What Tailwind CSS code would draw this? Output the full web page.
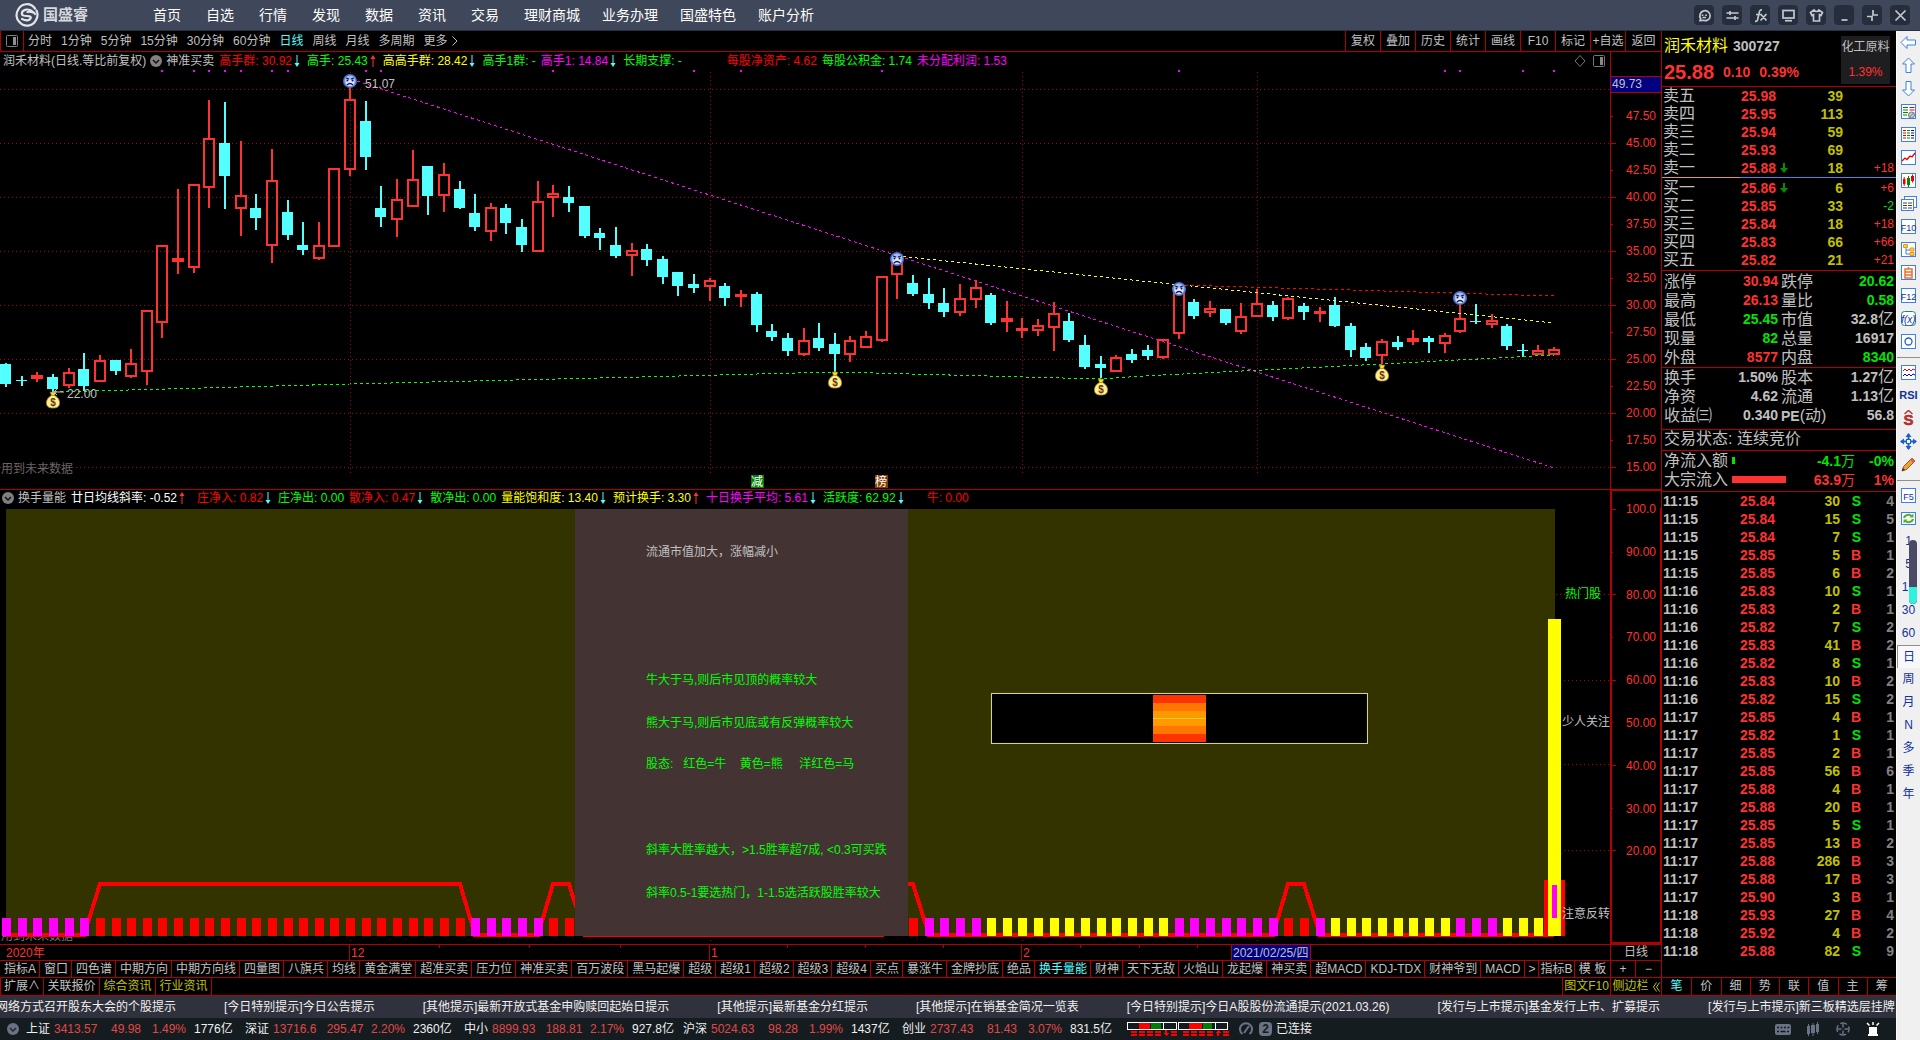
<!DOCTYPE html>
<html lang="zh-CN">
<head>
    <meta charset="UTF-8">
    <meta name="viewport" content="width=device-width, initial-scale=1.0">
    <title>国盛睿 - 润禾材料 300727</title>
    <script src="https://cdn.jsdelivr.net/npm/@tailwindcss/browser@4"></script>
</head>
<body class="flex h-screen flex-col overflow-hidden bg-black font-['Liberation_Sans','Noto_Sans_CJK_SC',sans-serif] text-xs text-[#c0c0c0]">

    <!-- title bar -->
    <header class="flex h-[31px] shrink-0 items-center border-b border-[#2a3040] bg-[#3f475a] pr-[10px] pl-[15px]">
        <svg class="h-6 w-6" viewBox="0 0 24 24" fill="none" stroke="#e4e6ea" stroke-width="2.2" stroke-linecap="round">
            <path d="M20 5.5A10 10.5 0 0 0 3 7c-2.500 4-1.500 9 1 11.500"/>
            <path d="M17.500 8.500C14 5.500 8 6 7 9.500c-.8 3 2 3.500 5 3.500 2.500 0 4.500.5 3.500 2.500-1 2.200-4.500 2.500-8.500.5"/>
            <path d="M4.500 19A10 10.500 0 0 0 21 17c2.300-4 1.800-7 .5-9.500"/>
            <path d="M20 11c-.5-1.500-4-2.800-7.500-2"/>
        </svg>
        <span class="ml-1 w-[110px] text-[15px] leading-5 font-bold text-[#d6d9df]">国盛睿</span>
        <nav class="flex gap-[22px] text-sm leading-5 whitespace-nowrap text-white">
            <div class="flex gap-[25px]">
                <a href="#">首页</a><a href="#">自选</a><a href="#">行情</a><a href="#">发现</a><a href="#">数据</a><a href="#">资讯</a><a href="#">交易</a><a href="#">理财商城</a>
            </div>
            <a href="#">业务办理</a><a href="#">国盛特色</a><a href="#">账户分析</a>
        </nav>
        <div id="window-buttons" class="ml-auto flex gap-2"></div>
    </header>

    <div class="flex min-h-0 flex-1">
        <div class="flex min-w-0 flex-1 flex-col">
            <div class="flex min-h-0 flex-1">

                <!-- charts -->
                <main class="flex min-w-0 flex-1 flex-col border-r border-[#b00000]">
                    <div class="flex h-[21px] shrink-0 items-center border-b border-[#b00000] leading-5 whitespace-nowrap">
                        <button class="flex h-5 w-6 items-center justify-center border-x border-[#b00000]" aria-label="侧栏">
                            <svg class="h-3 w-3" viewBox="0 0 12 12"><rect x=".5" y=".5" width="11" height="11" rx="1" fill="none" stroke="#808080"/><rect x="7" y="2" width="3" height="8" fill="#909090"/></svg>
                        </button>
                        <div class="flex gap-[9px] pl-1">
                            <button>分时</button><button>1分钟</button><button>5分钟</button><button>15分钟</button><button>30分钟</button><button>60分钟</button><button class="text-[#54ffff]">日线</button><button>周线</button><button>月线</button><button>多周期</button>
                            <button class="flex items-center">更多<svg class="ml-1 h-3 w-[6px]" viewBox="0 0 6 12" fill="none" stroke="#c0c0c0"><path d="M.5 1.500L5 6 .5 10.500"/></svg></button>
                        </div>
                        <div class="ml-auto flex">
                            <button class="w-[35px] border-l border-[#b00000]">复权</button><button class="w-[35px] border-l border-[#b00000]">叠加</button><button class="w-[35px] border-l border-[#b00000]">历史</button><button class="w-[35px] border-l border-[#b00000]">统计</button><button class="w-[35px] border-l border-[#b00000]">画线</button><button class="w-[35px] border-l border-[#b00000]">F10</button><button class="w-[35px] border-l border-[#b00000]">标记</button><button class="w-[35px] border-l border-[#b00000]">+自选</button><button class="w-[36px] border-l border-[#b00000]">返回</button>
                        </div>
                    </div>

                    <section class="flex min-h-0 flex-[437] flex-col border-b border-[#b00000]">
                        <div class="flex h-[18px] shrink-0 leading-[18px] whitespace-nowrap">
                            <div class="flex min-w-0 flex-1 items-center overflow-hidden pl-[3px]">
                                <span>润禾材料(日线.等比前复权)</span>
                                <svg class="mx-1 h-3 w-3 shrink-0" viewBox="0 0 12 12"><circle cx="6" cy="6" r="6" fill="#808080"/><path d="M3 5l3 3 3-3" fill="none" stroke="#111" stroke-width="1.500"/></svg>
                                <span class="mr-[5px]">神准买卖</span>
                                <div id="readout-price" class="flex gap-[5px]"></div>
                                <svg class="mr-[3px] ml-auto h-4 w-[34px] shrink-0" viewBox="0 0 34 16" fill="none" stroke="#777"><path d="M7 2.500L12 8 7 13.500 2 8z"/><rect x="20.500" y="2.500" width="11" height="11" rx="1"/><rect x="27" y="4" width="3" height="8" fill="#888" stroke="none"/></svg>
                            </div>
                            <div class="w-[51px] border-l border-[#b00000]"></div>
                        </div>
                        <div class="min-h-0 flex-1"><svg id="chart-price" class="block h-full w-full overflow-visible"></svg></div>
                    </section>

                    <section class="flex min-h-0 flex-[455] flex-col">
                        <div class="flex h-[18px] shrink-0 leading-4 whitespace-nowrap">
                            <div class="flex min-w-0 flex-1 items-center overflow-hidden pb-[2px] pl-[2px]">
                                <svg class="mr-1 h-3 w-3 shrink-0" viewBox="0 0 12 12"><circle cx="6" cy="6" r="6" fill="#808080"/><path d="M3 5l3 3 3-3" fill="none" stroke="#111" stroke-width="1.500"/></svg>
                                <span class="mr-[5px]">换手量能</span>
                                <div id="readout-volume" class="flex gap-[5px]"></div>
                            </div>
                            <div class="w-[51px] border-t border-l-2 border-[#b00000]"></div>
                        </div>
                        <div class="min-h-0 flex-1"><svg id="chart-volume" class="block h-full w-full overflow-visible"></svg></div>
                    </section>

                    <div class="flex h-4 shrink-0 border-t border-[#b00000] leading-[15px]">
                        <div class="min-w-0 flex-1"><svg id="date-axis" class="block h-full w-full"></svg></div>
                        <button class="w-[51px] border-l border-[#b00000]">日线</button>
                    </div>

                    <div class="flex h-[17px] shrink-0 border-t border-[#b00000] leading-4 whitespace-nowrap">
                        <div id="indicator-tabs" class="flex min-w-0 flex-1 overflow-hidden"></div>
                        <button class="w-[37px] border-x border-[#b00000]">指标B</button>
                        <button class="w-[35px]">模 板</button>
                        <button class="w-[25px] border-l border-[#b00000]">+</button>
                        <button class="w-[26px] border-l border-[#b00000]">−</button>
                    </div>

                    <div class="flex h-[19px] shrink-0 border-y border-[#b00000] leading-[17px] whitespace-nowrap">
                        <button class="w-11 border-x border-[#b00000]">扩展∧</button>
                        <button class="w-14 border-r border-[#b00000]">关联报价</button>
                        <button class="w-14 border-r border-[#b00000] text-[#c0c000]">综合资讯</button>
                        <button class="w-14 border-r border-[#b00000] text-[#c0c000]">行业资讯</button>
                        <button class="ml-auto w-12 border-l border-[#b00000] text-[#c0c000]">图文F10</button>
                        <button class="flex w-[51px] items-center justify-center gap-1 border-l border-[#b00000] text-[#c0c000]">侧边栏<svg class="h-[10px] w-[7px]" viewBox="0 0 7 10" fill="none" stroke="#c0c000"><path d="M3.500.5L.5 5l3 4.500M6.500.5l-3 4.500 3 4.500"/></svg></button>
                    </div>
                </main>

                <!-- quote panel -->
                <aside class="flex w-[234px] shrink-0 flex-col">
                    <div class="flex h-14 shrink-0 justify-between border-b border-[#b00000] pt-[5px] pr-[6px] pl-[2px]">
                        <div>
                            <div class="flex items-center gap-[5px] leading-5">
                                <span class="text-base leading-5 text-[#ffff00]">润禾材料</span>
                                <span class="text-sm leading-5 font-bold">300727</span>
                            </div>
                            <div class="mt-1 flex items-center gap-[9px] text-sm leading-6 font-bold text-[#ff3232]">
                                <span class="text-xl leading-6">25.88</span><span>0.10</span><span>0.39%</span>
                            </div>
                        </div>
                        <a href="#" class="flex h-12 w-[49px] flex-col items-center justify-between bg-[#1e1e20] pt-[2px] pb-[3px] leading-[18px] whitespace-nowrap">
                            <span>化工原料</span><span class="text-[#ff3232]">1.39%</span>
                        </a>
                    </div>

                    <table class="w-full table-fixed text-right text-sm leading-[18px]">
                        <tbody id="asks"></tbody>
                    </table>
                    <div class="flex h-px shrink-0 bg-[#3c8ce0]"><div class="w-1/3 bg-[#e0a020]"></div></div>
                    <table class="my-[1px] w-full table-fixed text-right text-sm leading-[18px]">
                        <tbody id="bids"></tbody>
                    </table>

                    <dl id="stats-day" class="grid h-[98px] shrink-0 auto-rows-[19px] grid-cols-[48px_66px_54px_62px] content-start border-y border-[#b00000] pt-[1px] pl-[2px] leading-[19px] whitespace-nowrap"></dl>
                    <dl id="stats-base" class="grid h-[62px] shrink-0 auto-rows-[19px] grid-cols-[48px_66px_54px_62px] content-start border-b border-[#b00000] pl-[2px] leading-[19px] whitespace-nowrap"></dl>
                    <p class="h-[21px] shrink-0 border-b border-[#b00000] pl-[2px] text-base leading-[18px]">交易状态: 连续竞价</p>

                    <div class="h-[41px] shrink-0 border-b border-[#b00000] pl-[2px] text-base leading-5">
                        <div class="flex h-[19px] items-center">
                            <span class="w-[68px]">净流入额</span>
                            <div class="w-14"><div class="h-[7px] bg-[#00e600]" style="width:3px"></div></div>
                            <b class="w-[67px] text-right text-sm leading-5 text-[#00e600]">-4.1<span class="font-normal">万</span></b>
                            <b class="w-[39px] text-right text-sm leading-5 text-[#00e600]">-0%</b>
                        </div>
                        <div class="flex h-[19px] items-center">
                            <span class="w-[68px]">大宗流入</span>
                            <div class="w-14"><div class="h-[7px] bg-[#ff3232]" style="width:54px"></div></div>
                            <b class="w-[67px] text-right text-sm leading-5 text-[#ff3232]">63.9<span class="font-normal">万</span></b>
                            <b class="w-[39px] text-right text-sm leading-5 text-[#ff3232]">1%</b>
                        </div>
                    </div>

                    <div class="min-h-0 flex-1 overflow-hidden">
                        <table class="w-full table-fixed text-right text-sm leading-[18px]">
                            <tbody id="ticks"></tbody>
                        </table>
                    </div>
                    <div class="grid h-[19px] shrink-0 grid-cols-8 border-y border-[#b00000] leading-[17px]">
                        <button class="text-[#54ffff]">笔</button><button class="border-l border-[#b00000]">价</button><button class="border-l border-[#b00000]">细</button><button class="border-l border-[#b00000]">势</button><button class="border-l border-[#b00000]">联</button><button class="border-l border-[#b00000]">值</button><button class="border-l border-[#b00000]">主</button><button class="border-l border-[#b00000]">筹</button>
                    </div>
                </aside>
            </div>

            <!-- news ticker -->
            <div class="flex h-[22px] shrink-0 items-center overflow-hidden bg-[#2f323c] leading-[22px] text-[#f0f0f0]">
                <div class="-ml-1 flex shrink-0 gap-12 whitespace-nowrap">
                    <a href="#">网络方式召开股东大会的个股提示</a>
                    <a href="#">[今日特别提示]今日公告提示</a>
                    <a href="#">[其他提示]最新开放式基金申购赎回起始日提示</a>
                    <a href="#">[其他提示]最新基金分红提示</a>
                    <a href="#">[其他提示]在销基金简况一览表</a>
                    <a href="#">[今日特别提示]今日A股股份流通提示(2021.03.26)</a>
                    <a href="#">[发行与上市提示]基金发行上市、扩募提示</a>
                    <a href="#">[发行与上市提示]新三板精选层挂牌</a>
                </div>
            </div>

            <!-- status bar -->
            <footer class="flex h-[22px] shrink-0 items-center overflow-hidden bg-[#151c20] pl-[7px] leading-[22px] whitespace-nowrap text-[#f0f0f0]">
                <svg class="mr-[7px] h-3 w-3 shrink-0" viewBox="0 0 12 12"><circle cx="6" cy="6" r="6" fill="#6a7285"/><path d="M3 5l3 3 3-3" fill="none" stroke="#20262c" stroke-width="1.500"/></svg>
                <div id="indices" class="flex"></div>
                <svg class="ml-[6px] h-[14px] w-[102px] shrink-0" viewBox="0 0 102 14" shape-rendering="crispEdges">
                    <g fill="none" stroke="#fff"><rect x=".5" y=".5" width="49" height="7"/><rect x="51.500" y=".5" width="49" height="7"/></g>
                    <path fill="#f00" d="M12 1h11v6H12zM62 1h13v6H62z"/><path fill="#008000" d="M24 1h10v6H24zM76 1h9v6h-9z"/><path fill="#fff" d="M36 1h1v6h-1zM88 1h1v6h-1z"/>
                    <path stroke="#f00" stroke-width="2" stroke-dasharray="6 2" d="M4 10h30M44 10h6M4 13h30M44 13h6M56 10h30M96 10h6M56 13h30M96 13h6"/>
                    <path fill="#f00" d="M38 8h2v3h2l-3 3-3-3h2zM90 14h2v-3h2l-3-3-3 3h2z"/>
                </svg>
                <svg class="ml-[10px] h-[14px] w-[14px] shrink-0" viewBox="0 0 14 14" fill="none" stroke="#6a7285" stroke-width="2"><path d="M3.500 12A6 6 0 1 1 10.500 12"/><path d="M5 11l5-7"/></svg>
                <span class="ml-[6px] h-[14px] w-[13px] shrink-0 rounded-sm bg-[#6a7285] text-center leading-[14px] font-bold text-[#151c20]">2</span>
                <span class="ml-1">已连接</span>
                <div class="mr-[15px] ml-auto flex shrink-0 items-center gap-[14px]">
                    <svg class="h-4 w-4" viewBox="0 0 16 16"><rect y="3" width="16" height="11" rx="2" fill="#6a7285"/><path d="M2 6.500h2m1.500 0h2m1.500 0h2m1.500 0h2M2 10.500h2m1.500 0h5m1.500 0h2" stroke="#151c20" stroke-width="1.500"/></svg>
                    <svg class="h-4 w-4" viewBox="0 0 16 16" fill="#6a7285"><path d="M2 5h3v8H2zM3 3h1v12H3zM6 4h4v8H6zM7.500 2h1v13h-1zM11 3h3v8h-3zM12 1h1v12h-1z"/></svg>
                    <svg class="h-4 w-4" viewBox="0 0 16 16" fill="none" stroke="#6a7285" stroke-width="1.500"><circle cx="8" cy="8" r="6" stroke-dasharray="7 2.420" stroke-dashoffset="3.500"/><path d="M8 3v3.500M8 9.500V13M3 8h3.500M9.500 8H13"/></svg>
                    <svg class="h-4 w-4" viewBox="0 0 16 16" fill="#fff"><path d="M4 6h8v7H4zM3 13h10v2H3z"/><path d="M8 1v3M2 2l2.500 2.500M14 2l-2.500 2.500" stroke="#fff" stroke-width="1.500"/></svg>
                </div>
            </footer>
        </div>

        <!-- side toolbar -->
        <nav class="relative flex w-6 shrink-0 flex-col items-center border-l border-white bg-[#f0f0f0] text-[#10309c]">
            <div id="side-tools" class="flex w-full flex-col"></div>
            <div class="absolute top-[509px] right-[3px] flex h-16 w-2 flex-col justify-end overflow-hidden rounded-full bg-[#4a4a66]">
                <div class="h-[17px] rounded-b-full bg-[#30f0e0]"></div>
            </div>
        </nav>
    </div>

    <script>
        const RED = '#ff3232', CYAN = '#54ffff', LINE = '#b00000', MAG = '#ff00ff';

        // ---------- title bar buttons ----------
        const windowIcons = [
            ['消息', '<path d="M3 12.500l.7-2A5.200 5 0 1 1 6 12.300z"/><path d="M5.500 6.500v1.500M9 6.500v1.500M5.500 9.500h3.500"/>'],
            ['设置', '<path d="M1.500 5h12M1.500 10h12M5 3v4M10 8v4"/>'],
            ['公式', '<path d="M9 2C7 1.500 6.500 3 6 5.500L4.500 12c-.5 1.500-1 1.500-2.500 1.200M3 6.500h6M8 6.500l5.500 6M13.500 6L7.500 12.500"/>'],
            ['屏幕', '<rect x="2" y="2.500" width="11" height="7.500"/><path d="M4 12.700h7"/>'],
            ['皮肤', '<path d="M5 2L1.500 4.500 3 7.500l1.500-.8V13h6V6.700l1.500.8 1.500-3L10 2c-1 2-4 2-5 0z"/>'],
            ['最小化', '<path d="M4.500 12h6"/>'],
            ['还原', '<path d="M2 8.500h5V13M8 2v5h5"/>'],
            ['关闭', '<path d="M2.500 2.500l10 10M12.500 2.500l-10 10"/>']
        ];
        document.getElementById('window-buttons').innerHTML = windowIcons.map(([name, path]) =>
            `<button aria-label="${name}" class="flex h-5 w-5 items-center justify-center rounded bg-[#262e3e]"><svg class="h-[15px] w-[15px]" viewBox="0 0 15 15" fill="none" stroke="#c4c8d0" stroke-width="1.700">${path}</svg></button>`).join('');

        // ---------- indicator readouts ----------
        function readout(items) {
            return items.map(([text, color, dir, pad]) => {
                let arrow = '';
                if (dir === 'd') arrow = '<svg class="h-[14px] w-[10px]" viewBox="0 0 10 14"><path d="M4.500 1h1v8h2L5 13 2.500 9h2z" fill="#54ffff"/></svg>';
                if (dir === 'u') arrow = '<svg class="h-[14px] w-[10px]" viewBox="0 0 10 14"><path d="M4.500 13h1V5h2L5 1 2.500 5h2z" fill="#ff3232"/></svg>';
                return `<span class="flex items-center ${pad || ''}" style="color:${color}">${text}${arrow}</span>`;
            }).join('');
        }
        document.getElementById('readout-price').innerHTML = readout([
            ['高手群: 30.92', '#f00', 'd'], ['高手: 25.43', '#0f0', 'u'], ['高高手群: 28.42', '#ff0', 'd'],
            ['高手1群: -', '#0f0'], ['高手1: 14.84', '#f0f', 'd'], ['长期支撑: -', '#0f0'],
            ['每股净资产: 4.62', '#f00', '', 'pl-10'], ['每股公积金: 1.74', '#0f0'], ['未分配利润: 1.53', '#f0f']
        ]);
        document.getElementById('readout-volume').innerHTML = readout([
            ['廿日均线斜率: -0.52', '#fff', 'u', 'pr-[5px]'], ['庄净入: 0.82', '#f00', 'd'], ['庄净出: 0.00', '#0f0'],
            ['散净入: 0.47', '#f00', 'd'], ['散净出: 0.00', '#0f0'], ['量能饱和度: 13.40', '#ff0', 'd'],
            ['预计换手: 3.30', '#ff0', 'u'], ['十日换手平均: 5.61', '#f0f', 'd'], ['活跃度: 62.92', '#0f0', 'd'],
            ['牛: 0.00', '#f00', '', 'pl-4']
        ]);

        // ---------- indicator tabs ----------
        const tabs = ['指标A', '窗口', '四色谱', '中期方向', '中期方向线', '四量图', '八旗兵', '均线', '黄金满堂', '超准买卖', '压力位', '神准买卖', '百万波段', '黑马起爆', '超级', '超级1', '超级2', '超级3', '超级4', '买点', '暴涨牛', '金牌抄底', '绝品', '换手量能', '财神', '天下无敌', '火焰山', '龙起爆', '神买卖', '超MACD', 'KDJ-TDX', '财神爷到', 'MACD', '>'];
        document.getElementById('indicator-tabs').innerHTML = tabs.map(t =>
            `<button class="shrink-0 border-r border-[#b00000] pr-[3px] pl-1 ${t === '换手量能' ? 'text-[#54ffff]' : ''}">${t}</button>`).join('');

        // ---------- order book ----------
        function bookRow([name, price, vol, diff, arrow]) {
            return `<tr><th class="w-12 pl-[1px] text-left text-base leading-[18px] font-normal">${name}</th>
                <td class="w-[66px] font-bold text-[#ff3232]">${price}</td>
                <td class="w-4">${arrow ? '<svg class="mx-auto h-[10px] w-2" viewBox="0 0 8 10"><path d="M3 0h2v5h3L4 10 0 5h3z" fill="#009000"/></svg>' : ''}</td>
                <td class="w-[51px] font-bold text-[#c0c000]">${vol}</td>
                <td class="pr-[2px] text-xs leading-[18px]" style="color:${diff[0] === '-' ? '#00e600' : RED}">${diff}</td></tr>`;
        }
        document.getElementById('asks').innerHTML = [['卖五', '25.98', 39, ''], ['卖四', '25.95', 113, ''], ['卖三', '25.94', 59, ''], ['卖二', '25.93', 69, ''], ['卖一', '25.88', 18, '+18', 1]].map(bookRow).join('');
        document.getElementById('bids').innerHTML = [['买一', '25.86', 6, '+6', 1], ['买二', '25.85', 33, '-2'], ['买三', '25.84', 18, '+18'], ['买四', '25.83', 66, '+66'], ['买五', '25.82', 21, '+21']].map(bookRow).join('');

        function stats(items) {
            return items.map(([name, value, color], i) =>
                `<dt class="text-base leading-[19px] ${i % 2 ? 'pl-[3px]' : ''}">${name}</dt><dd class="text-right text-sm leading-[19px] font-bold" style="color:${color || '#c0c0c0'}">${value}</dd>`).join('');
        }
        const yi = '<span class="text-base leading-4 font-normal">亿</span>';
        document.getElementById('stats-day').innerHTML = stats([
            ['涨停', '30.94', RED], ['跌停', '20.62', '#00e600'], ['最高', '26.13', RED], ['量比', '0.58', '#00e600'],
            ['最低', '25.45', '#00e600'], ['市值', '32.8' + yi], ['现量', '82', '#00e600'], ['总量', '16917'],
            ['外盘', '8577', RED], ['内盘', '8340', '#00e600']
        ]);
        document.getElementById('stats-base').innerHTML = stats([
            ['换手', '1.50%'], ['股本', '1.27' + yi], ['净资', '4.62'], ['流通', '1.13' + yi],
            ['收益㈢', '0.340'], ['<b class="text-sm leading-4">PE</b>(动)', '56.8']
        ]);

        // ---------- trades ----------
        const trades = `15 84 30 S 4|15 84 15 S 5|15 84 7 S 1|15 85 5 B 1|15 85 6 B 2|16 83 10 S 1|16 83 2 B 1|16 82 7 S 2|16 83 41 B 2|16 82 8 S 1|16 83 10 B 2|16 82 15 S 2|17 85 4 B 1|17 82 1 S 1|17 85 2 B 1|17 85 56 B 6|17 88 4 B 1|17 88 20 B 1|17 85 5 S 1|17 85 13 B 2|17 88 286 B 3|17 88 17 B 3|17 90 3 B 1|18 93 27 B 4|18 92 4 B 2|18 88 82 S 9`;
        document.getElementById('ticks').innerHTML = trades.split('|').map(row => {
            const [m, p, v, side, n] = row.split(' ');
            return `<tr class="font-bold"><td class="w-[50px] pl-[1px] text-left">11:${m}</td><td class="w-[63px] text-[#ff3232]">25.${p}</td><td class="w-[65px] text-[#c0c000]">${v}</td><td class="w-[21px]" style="color:${side === 'S' ? '#00e600' : RED}">${side}</td><td class="pr-[2px] text-[#808080]">${n}</td></tr>`;
        }).join('');

        // ---------- index quotes ----------
        const indices = [['上证', '3413.57', '49.98', '1.49%', '1776亿'], ['深证', '13716.6', '295.47', '2.20%', '2360亿'], ['中小', '8899.93', '188.81', '2.17%', '927.8亿'], ['沪深', '5024.63', '98.28', '1.99%', '1437亿'], ['创业', '2737.43', '81.43', '3.07%', '831.5亿']];
        document.getElementById('indices').innerHTML = indices.map(([name, p, c, pc, v]) =>
            `<div class="flex w-[219px] shrink-0"><span class="w-7">${name}</span><span class="w-[46px] text-[#e04848]">${p}</span><span class="w-[52px] text-center text-[#e04848]">${c}</span><span class="w-[42px] text-[#e04848]">${pc}</span><span>${v}</span></div>`).join('');

        // ---------- side toolbar ----------
        const box = '<rect x="1.500" y="1.500" width="14" height="14" fill="#fff" stroke="#3c80f0"/>';
        const label = (t) => box + `<text x="8.500" y="12.500" text-anchor="middle" font-size="9" fill="#1030b0">${t}</text>`;
        const side = [
            ['后退', '<path d="M1 8.500l6-6v3.500h8.500v5H7v3.500z" fill="#fff" stroke="#3c80f0"/>'],
            ['上翻', '<path d="M8.500 1l6 6h-3.500v8.500H6V7H2.500z" fill="#fff" stroke="#3c80f0"/>'],
            ['下翻', '<path d="M8.500 16l6-6h-3.500V1.500H6V10H2.500z" fill="#fff" stroke="#3c80f0"/>'],
            ['报价', box + '<path d="M3 4.500h5M3 7h5M3 9.500h5M3 12h4" stroke="#080"/><path d="M9.500 4.500h5M9.500 7h5" stroke="#e00"/><circle cx="11.500" cy="12" r="3" fill="#ccc" stroke="#777"/><path d="M9 14.500l5-5" stroke="#777"/>'],
            ['列表', box + '<path d="M3 4.500h3M3 7h3M3 9.500h3M3 12h3" stroke="#e00"/><path d="M7 4.500h3M7 7h3M7 9.500h3M7 12h3" stroke="#080"/><path d="M11 4.500h3M11 7h3M11 9.500h3M11 12h3" stroke="#00e"/>'],
            ['分时图', box + '<path d="M2 12l3-3 2 1.500 3-3.500 2 1 3-4" fill="none" stroke="#e00" stroke-width="1.300"/>'],
            ['K线图', box + '<path d="M3 7h2.500v5H3zM11 4h3v5h-3z" fill="#e00"/><path d="M7 6h3v7H7z" fill="#080"/><path d="M4.200 5v9M12.500 2.500v8" stroke="#e00"/><path d="M8.500 4v11" stroke="#080"/>'],
            ['多窗口', '<rect x="4.500" y="1.500" width="12" height="11" fill="#fff" stroke="#3c80f0"/><rect x="1.500" y="4.500" width="12" height="11" fill="#fff" stroke="#3c80f0"/><path d="M3 8h4M8 8h4M3 10.500h4M8 10.500h4M3 13h4M8 13h4" stroke="#444"/>'],
            ['F10', label('F10')],
            ['板块', box + '<path d="M6 6v7h4M6 9h4" fill="none" stroke="#3c80f0"/><path d="M3.500 3.500h4v3h-4zM10 7h4v3h-4zM10 11.500h4v3h-4z" fill="#fc6" stroke="#e90"/>'],
            ['自选', box + '<path d="M5 5h7v9H5zM5 8h7M5 11h7M8.500 5V3" fill="none" stroke="#f07030" stroke-width="1.500"/>'],
            ['F12', label('F12')],
            ['公式', '<rect x="1.500" y="1.500" width="14" height="14" rx="3" fill="#fff" stroke="#208080"/><text x="8.500" y="12.500" text-anchor="middle" font-size="10" font-style="italic" fill="#1030b0">f(x)</text>'],
            ['画线', box + '<circle cx="8.500" cy="8.500" r="3.500" fill="none" stroke="#2060d0" stroke-width="1.300"/>'],
            '-',
            ['波浪', box + '<path d="M3 7l2-2 2 2 2-2 2 2 2-2 2 1" fill="none" stroke="#e00"/><path d="M3 12l2-2 2 2 2-2 2 2 2-2 2 1" fill="none" stroke="#00e"/>'],
            'RSI',
            ['资金', '<text x="8.500" y="15" text-anchor="middle" font-size="15" font-weight="bold" fill="#d03030" stroke="#902020" stroke-width=".5">S</text><path d="M4.500 4l4-3.500 4 3.500" fill="none" stroke="#c03030" stroke-width="1.500"/>'],
            ['移动', '<path d="M8.500 1v15M1 8.500h15" stroke="#1860d0" stroke-width="2"/><path d="M8.500 0l3 4h-6zM8.500 17l3-4h-6zM0 8.500l4-3v6zM17 8.500l-4-3v6z" fill="#1860d0"/><rect x="6.500" y="6.500" width="4" height="4" fill="#fff" stroke="#1860d0"/>'],
            ['铅笔', '<path d="M2 15l1.500-4.500L12 2l3 3-8.500 8.500z" fill="#f0a030" stroke="#806030"/><path d="M12 2l3 3-2 2-3-3z" fill="#e06060"/><path d="M2 15l1-3 2 2z" fill="#333"/>'],
            '-',
            ['F5', label('F5')],
            ['刷新', '<rect x="1.500" y="2.500" width="14" height="12" fill="#fff" stroke="#3c80f0"/><path d="M4 8a4.500 4 0 0 1 8-1.500M13 9a4.500 4 0 0 1-8 1.500" fill="none" stroke="#50b030" stroke-width="2"/><path d="M13.500 3.500v4h-4zM3.500 13.500v-4h4z" fill="#50b030"/>'],
            '1', '5', '15', '30', '60', '日', '周', '月', 'N', '多', '季', '年'
        ];
        document.getElementById('side-tools').innerHTML = side.map(s => {
            if (s === '-') return '<div class="flex h-2 items-center"><div class="h-px w-full bg-[#909090]"></div></div>';
            if (typeof s === 'string') return `<button class="h-[23px] w-full text-center leading-[23px] ${s === '日' ? 'border-t border-l border-[#909090] bg-[#f8f8f8]' : ''} ${s === 'RSI' ? 'text-[11px] font-bold' : ''}">${s}</button>`;
            return `<button aria-label="${s[0]}" class="flex h-[23px] w-full items-center justify-center"><svg class="h-[17px] w-[17px]" viewBox="0 0 17 17">${s[1]}</svg></button>`;
        }).join('');

        // ---------- charts ----------
        // each candle: colour, wick top, body top, body bottom, wick bottom
        const candles = `c362,363,383,386 c375,379,380,385 r371,374,378,381 c373,376,388,392 r367,371,385,387 c352,368,385,390 r354,359,381,381 c359,359,370,374 r348,362,376,377 r309,309,371,384
            r245,245,322,337 r189,258,262,274 r184,184,268,273 r100,138,188,208 c102,143,176,209 r141,195,209,236 c194,208,218,230 r149,180,246,263 c200,212,235,240 c222,245,250,255
            r222,245,259,260 r168,168,247,247 r80,99,170,176 c101,121,157,170 c186,208,217,227 r179,199,220,237 r150,179,207,207 c166,166,196,215 r163,174,196,212 c181,189,208,209
            c194,213,227,231 r203,207,232,241 c204,208,223,234 c219,227,245,252 r181,201,252,252 r185,193,198,217 c186,197,203,212 c206,206,236,238 c228,233,238,250 c227,245,256,258
            r243,250,256,276 c244,249,260,266 c256,259,277,283 c272,272,285,295 c274,283,287,292 r278,279,286,300 c282,285,297,305 r289,293,296,306 c291,293,324,331 c323,330,336,340
            c332,337,350,355 r327,339,354,355 c322,337,347,350 c332,343,353,371 r335,339,354,361 r330,335,347,347 r276,276,340,341 r262,262,275,298 c275,282,293,295 c278,293,302,308
            c287,302,311,316 r283,297,312,315 r279,286,299,307 c292,294,322,324 r300,317,321,331 r317,327,330,337 r318,324,330,335 r301,312,327,350 c312,320,339,341 c334,344,366,368
            c355,363,367,377 r354,356,371,371 c348,353,359,362 c344,349,355,359 r338,338,357,358 r290,290,333,338 c298,301,315,318 r300,307,312,316 c308,308,322,324 r302,315,331,333
            r288,302,316,316 c300,304,316,320 r296,297,318,319 c302,305,311,319 r306,310,313,321 c296,304,325,326 c322,325,349,356 c342,346,357,360 r338,340,355,363 c335,341,346,349
            r329,337,341,344 c335,337,341,352 r332,334,343,352 r303,317,331,332 c303,320,321,323 r313,319,324,327 c323,325,345,349 c343,349,350,356 r344,349,354,354 r346,348,354,354`.trim().split(/\s+/);
        const strip = 'mmmmmm' + 'r'.repeat(24) + 'mmmmm' + 'r'.repeat(24) + 'mmmm' + 'y'.repeat(12) + 'mmmmmmm' + 'rr' + 'm' + 'yyyyyyyy' + 'mmm' + 'yyy';
        const stripColor = { m: MAG, r: '#ff0000', y: '#ffff00' };

        const hline = (x1, x2, y, extra) => `<line x1="${x1}" x2="${x2}" y1="${y}" y2="${y}" stroke="${LINE}" ${extra || ''}/>`;
        const vline = (x, y1, y2, extra) => `<line x1="${x}" x2="${x}" y1="${y1}" y2="${y2}" stroke="${LINE}" ${extra || ''}/>`;
        const rect = (x, y, w, h, fill, extra) => `<rect x="${x}" y="${y}" width="${Math.max(0, w)}" height="${Math.max(0, h)}" fill="${fill}" ${extra || ''}/>`;
        const text = (x, y, s, fill, anchor) => `<text x="${x}" y="${y}" fill="${fill}" font-size="12" text-anchor="${anchor || 'start'}">${s}</text>`;

        // plot coordinates run 1610 wide; top is the y of the plot's first row
        function scale(svg, axisWidth, top, height) {
            const w = svg.clientWidth - axisWidth;
            const h = svg.clientHeight;
            return { w, h, X: v => Math.round(v * w / 1610), Y: v => Math.round((v - top) * h / height), C: i => Math.round((6.1 + i * 15.636) * w / 1610) };
        }

        function face(x, y) {
            return `<g transform="translate(${x} ${y})"><circle r="7" fill="#5070d0"/><circle r="5.500" fill="#a8bcf4"/><ellipse cy="2" rx="4" ry="3" fill="#dde4ff"/><path d="M-4-3l3 1M4-3l-3 1M-3 4q3-3 6 0" stroke="#101840" fill="none" stroke-width="1.300"/><circle cx="-2.500" cy="-.5" r=".9" fill="#101840"/><circle cx="2.500" cy="-.5" r=".9" fill="#101840"/></g>`;
        }
        function bag(x, y) {
            return `<g transform="translate(${x} ${y})"><path d="M-3 0h6l-1.500 3.500h-3z" fill="#ffe020" stroke="#806010" stroke-width=".6"/><path d="M-1.500 3.500C-6 6-6.500 9-6.500 11c0 4 3 5 6.500 5s6.500-1 6.500-5c0-2-.5-5-5-7.500z" fill="#fff090" stroke="#b09020" stroke-width=".8"/><text y="13.500" text-anchor="middle" font-size="10" font-weight="bold" fill="#703010">$</text></g>`;
        }

        function drawPrice() {
            const svg = document.getElementById('chart-price');
            const { w, h, X, Y, C } = scale(svg, 51, 70, 418);
            let s = '<g shape-rendering="crispEdges">';
            for (let k = 0; k < 8; k++) s += hline(0, w, Y(89 + k * 53.86) + .5, 'stroke-dasharray="1 3"');
            [350, 710, 1022, 1257].forEach(x => s += vline(X(x) + .5, Y(72), Y(474), 'stroke-dasharray="1 3"'));
            s += vline(w + .5, 0, h);
            for (let k = 1; k < 15; k++) {
                const y = 89 + k * 26.93;
                s += hline(w, w + (k % 2 ? 3 : 6), Y(y) + .5);
            }
            [10, 12, 13, 14, 15, 17, 18, 23, 24, 35, 44, 47, 56, 75, 92, 93, 97, 99].forEach(i => s += rect(C(i) - 1, Y(70), 2, 2, MAG));
            candles.forEach((c, i) => {
                const [a, b, d, e] = c.slice(1).split(',').map(v => Y(+v));
                const x = C(i);
                if (c[0] === 'c') {
                    s += rect(x - 1, a, 2, e - a, CYAN) + rect(x - 6, b, 11, Math.max(1, d - b), CYAN);
                } else {
                    s += rect(x - 1, a, 2, b - a, RED) + rect(x - 1, d, 2, e - d, RED);
                    s += d - b < 5 ? rect(x - 6, b, 12, d - b, RED) : rect(x - 5, b + 1, 10, d - b - 2, 'none', `stroke="${RED}" stroke-width="2"`);
                }
            });
            const dash = (pts, color) => `<polyline points="${pts.map(([x, y]) => X(x) + ',' + Y(y)).join(' ')}" fill="none" stroke="${color}" stroke-dasharray="3 3"/>`;
            s += dash([[357, 81], [1554, 467]], MAG);
            s += dash([[897, 256], [1554, 322]], '#ffff00');
            s += dash([[1179, 284], [1554, 295]], '#ff0000');
            s += dash([[54, 391], [350, 383], [640, 376], [835, 371], [1101, 378], [1143, 375], [1382, 363], [1554, 354]], '#00ff00');
            s += '</g>';
            [[350, 81], [897, 259], [1179, 288], [1460, 297]].forEach(([x, y]) => s += face(X(x), Y(y)));
            [[53, 391], [835, 371], [1101, 378], [1382, 364]].forEach(([x, y]) => s += bag(X(x), Y(y)));
            s += text(X(365), Y(88), '51.07', '#c0c0c0') + text(X(67), Y(397), '22.00', '#c0c0c0');
            s += `<path d="M${X(54)} ${Y(391)}h10m-7-3l-3 3 3 3" fill="none" stroke="#c0c0c0"/>`;
            s += text(1, Y(472), '用到未来数据', '#666');
            s += rect(X(751), Y(474), 13, 13, '#008000') + text(X(751), Y(485), '减', '#fff');
            s += rect(X(875), Y(474), 13, 13, '#804000') + text(X(875), Y(485), '榜', '#fff');
            for (let k = 1; k < 15; k++) s += text(w + 46, Y(89 + k * 26.93) + 4, (50 - k * 2.5).toFixed(2), RED, 'end');
            s += rect(w + .5, Y(76) + .5, 51, 16, '#000080', `stroke="${LINE}"`) + text(w + 2, Y(88), '49.73', '#c0c0c0');
            svg.innerHTML = s;
        }

        function drawVolume() {
            const svg = document.getElementById('chart-volume');
            const { w, h, X, Y, C } = scale(svg, 51, 507, 437);
            let s = text(1, Y(940), '用到未来数据', '#777') + '<g shape-rendering="crispEdges">';
            [593, 679, 764, 850].forEach(y => s += hline(X(1556), w, Y(y) + .5, 'stroke-dasharray="1 3"'));
            [350, 710, 1022, 1257].forEach(x => s += vline(X(x) + .5, Y(940), Y(943), 'stroke-dasharray="1 3"'));
            s += rect(0, Y(918), X(6), Y(936) - Y(918), '#000');
            s += rect(X(6), Y(508), X(1555) - X(6), Y(936) - Y(508), '#333300');
            const hi = Y(884), lo = Y(935);
            const steps = [[0, lo], [5, lo], [6, hi], [29, hi], [30, lo], [34, lo], [35, hi], [36, hi], [37, lo], [56, lo], [57, hi], [58, hi], [59, lo], [81, lo], [82, hi], [83, hi], [84, lo], [99, lo]];
            s += `<polyline points="${steps.map(([i, y]) => C(i) + ',' + y).join(' ')}" fill="none" stroke="#ff0000" stroke-width="4"/>`;
            [...strip].forEach((c, i) => s += rect(C(i) - 4, Y(918), 9, Y(936) - Y(918), stripColor[c]));
            s += rect(X(575), Y(508), X(908) - X(575), Y(936) - Y(508), '#443333');
            s += rect(X(1544), Y(880), 21, Y(936) - Y(880), '#ff0000') + rect(X(1548), Y(618), 13, Y(936) - Y(618), '#ffff00') + rect(X(1552), Y(885), 5, Y(918) - Y(885), MAG);
            // heat gauge
            s += rect(X(991) + .5, Y(692) + .5, X(1367) - X(991), Y(743) - Y(692), '#000', 'stroke="#e6e600"');
            [['#ff3300', 694, 742], ['#ff7700', 702, 734], ['#ff9900', 710, 726], ['#ffcc22', 717, 718]].forEach(([c, a, b]) => s += rect(X(1153), Y(a), X(1206) - X(1153), Y(b) - Y(a), c));
            s += vline(w + 1, 0, Y(944), 'stroke-width="2"') + hline(w, w + 51, Y(943), 'stroke-width="2"') + vline(w + 50.5, 0, Y(944));
            for (let k = 0; k < 9; k++) s += hline(w, w + (k % 2 ? 3 : 6), Y(508 + k * 42.75) + .5);
            s += '</g>';
            const gap = n => '&#160;'.repeat(n);
            const notes = [[550, '流通市值加大，涨幅减小', '#c0c0c0'], [678, '牛大于马,则后市见顶的概率较大'], [721, '熊大于马,则后市见底或有反弹概率较大'], [763, `股态:${gap(3)}红色=牛${gap(4)}黄色=熊${gap(5)}洋红色=马`], [849, '斜率大胜率越大，&gt;1.5胜率超7成, &lt;0.3可买跌'], [892, '斜率0.5-1要选热门，1-1.5选活跃股胜率较大']];
            notes.forEach(([y, t, c]) => s += text(X(646), Y(y) + 5, t, c || '#00ff00'));
            s += text(X(1565), Y(597), '热门股', '#00ff00') + text(w, Y(726), '少人关注', '#c0c0c0', 'end') + text(w, Y(918), '注意反转', '#c0c0c0', 'end');
            for (let k = 0; k < 9; k++) s += text(w + 46, Y(508 + k * 42.9) + 4, k ? (100 - k * 10).toFixed(2) : '100.0', RED, 'end');
            svg.innerHTML = s;
        }

        function drawDates() {
            const svg = document.getElementById('date-axis');
            const { X } = scale(svg, 51 - 51, 0, 15);
            let s = text(X(6), 12, '2020年', RED);
            [[349, '12'], [709, '1'], [1021, '2']].forEach(([x, t]) => s += vline(X(x) + .5, 0, 15) + text(X(x) + 2, 12, t, RED));
            [439, 529, 620, 787, 865, 943, 1080, 1139, 1197].forEach(x => s += vline(X(x) + .5, 0, 3));
            s += rect(X(1231) + .5, -.5, 79, 16, '#000080', `stroke="${LINE}"`) + text(X(1233), 12, '2021/02/25/四', '#c0c0c0');
            svg.innerHTML = s;
        }

        // redraw whenever a plot area gets its size
        const plots = { 'chart-price': drawPrice, 'chart-volume': drawVolume, 'date-axis': drawDates };
        const observer = new ResizeObserver(entries => entries.forEach(e => plots[e.target.firstElementChild.id]()));
        Object.keys(plots).forEach(id => observer.observe(document.getElementById(id).parentElement));
    </script>
</body>
</html>
